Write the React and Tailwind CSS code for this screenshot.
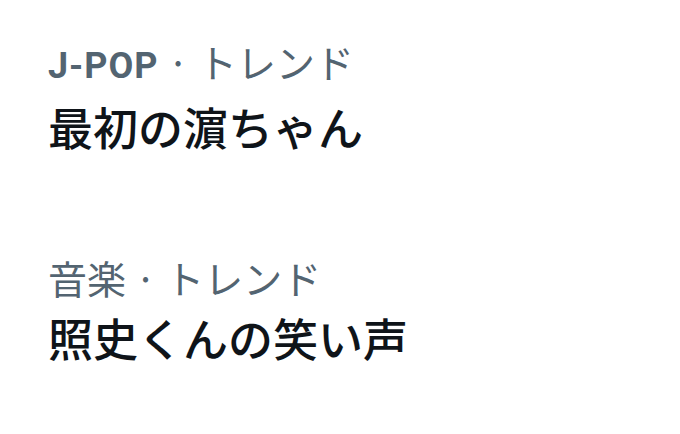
export default function App() {
  const items = [
    { cat: [{ t: "J-POP", b: true }, { t: " · トレンド" }], title: "最初の濵ちゃん" },
    { cat: [{ t: "音楽 · トレンド" }], title: "照史くんの笑い声" },
  ];
  return (
    <div
      className="w-[680px] h-[434px] bg-white overflow-hidden"
      style={{ fontFamily: '"Noto Sans CJK JP", "Noto Sans", sans-serif' }}
    >
      <div className="flex flex-col">
        {items.map((it, i) => (
          <div key={i} className="px-[48px] pt-[35px] flex flex-col h-[216px]">
            <div className="text-[39px] leading-[52px] text-[#536471]">
              {it.cat.map((c, j) => (
                <span
                  key={j}
                  className={c.b ? "font-bold text-[36px] tracking-[1px] font-['Roboto',sans-serif]" : ""}
                >
                  {c.t}
                </span>
              ))}
            </div>
            <div className="mt-[5px] text-[45px] leading-[60px] text-[#0f1419] font-medium">{it.title}</div>
          </div>
        ))}
      </div>
    </div>
  );
}
